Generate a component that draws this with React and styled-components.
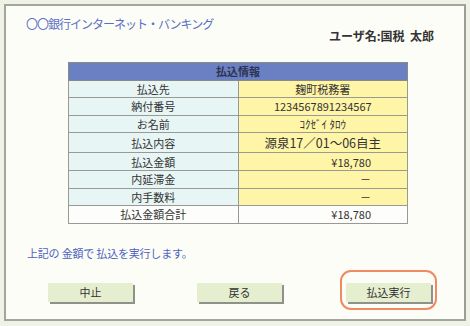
import React from 'react'
import styled, { createGlobalStyle } from 'styled-components'

const GlobalStyle = createGlobalStyle`
  html, body {
    margin: 0;
    padding: 0;
    background: #eff2e6;
  }
  body {
    font-family: "Noto Sans CJK JP", "Noto Sans", sans-serif;
  }
`

const Frame = styled.div`
  box-sizing: border-box;
  margin: 4px;
  width: 462px;
  height: 317px;
  border: 2px solid #a4a59c;
  border-right-color: #9c9d95;
  background: #fdfdf8;
  display: flex;
  flex-direction: column;
`

const TopBar = styled.div`
  display: flex;
  justify-content: space-between;
  align-items: flex-start;
  padding: 10px 30px 0 20px;
`

const Title = styled.div`
  font-size: 12px;
  letter-spacing: -1px;
  color: #5b6fc4;
  line-height: 16px;
`

const UserName = styled.div`
  margin-top: 12px;
  font-size: 12px;
  font-weight: bold;
  color: #333;
  line-height: 16px;
`

const InfoTable = styled.table`
  margin: 18px 0 0 62px;
  width: 340px;
  border-collapse: collapse;
  border: 1px solid #8a8a84;
  font-size: 11px;
  color: #333;
  table-layout: fixed;
`

const HeadCell = styled.th`
  height: 16.6px;
  padding: 0;
  background: #6b7fc3;
  border: 1px solid #8a8a84;
  font-weight: bold;
  color: #2d3350;
  text-align: center;
`

const LabelCell = styled.td`
  height: 16.6px;
  padding: 0;
  width: 170px;
  border: 1px solid #9a9a94;
  background: ${p => (p.$total ? '#fdfdfb' : '#e7f5f5')};
  text-align: center;
`

const ValueCell = styled.td`
  height: 16.6px;
  padding: ${p => (p.$right ? '0 36px 0 0' : '0')};
  border: 1px solid #9a9a94;
  background: ${p => (p.$total ? '#fdfdfb' : '#fff5a6')};
  text-align: ${p => (p.$right ? 'right' : 'center')};
  font-size: ${p => (p.$big ? '12.5px' : '11px')};
`

const Message = styled.div`
  margin: 21px 0 0 21px;
  font-size: 11px;
  color: #4d62c0;
  letter-spacing: -0.2px;
`

const ButtonRow = styled.div`
  display: flex;
  gap: 64px;
  padding-left: 42px;
  margin-top: 17px;
`

const ButtonWrap = styled.div`
  position: relative;
`

const Button = styled.button`
  box-sizing: border-box;
  width: 85px;
  height: 19px;
  padding: 0 0 1px;
  border: none;
  background: #e5efd0;
  box-shadow: 2px 2px 0 #8f918a;
  font-family: inherit;
  font-size: 11px;
  color: #333;
  cursor: pointer;
`

const FocusRing = styled.div`
  position: absolute;
  left: -6px;
  top: -8px;
  right: -6px;
  bottom: -8px;
  border: 2px solid #f08a62;
  border-radius: 11px;
  pointer-events: none;
`

const rows = [
  { label: '払込先', value: '麹町税務署' },
  { label: '納付番号', value: '1234567891234567' },
  { label: 'お名前', value: 'ｺｸｾﾞｲ ﾀﾛｳ' },
  { label: '払込内容', value: '源泉17／01～06自主', big: true },
  { label: '払込金額', value: '¥18,780', right: true },
  { label: '内延滞金', value: '－', right: true },
  { label: '内手数料', value: '－', right: true },
  { label: '払込金額合計', value: '¥18,780', right: true, total: true },
]

export default function App() {
  return (
    <>
      <GlobalStyle />
      <Frame>
        <TopBar>
          <Title>〇〇銀行インターネット・バンキング</Title>
          <UserName>ユーザ名:国税&nbsp;&nbsp;太郎</UserName>
        </TopBar>
        <InfoTable>
          <thead>
            <tr>
              <HeadCell colSpan={2}>払込情報</HeadCell>
            </tr>
          </thead>
          <tbody>
            {rows.map(r => (
              <tr key={r.label}>
                <LabelCell $total={r.total}>{r.label}</LabelCell>
                <ValueCell $total={r.total} $right={r.right} $big={r.big}>
                  {r.value}
                </ValueCell>
              </tr>
            ))}
          </tbody>
        </InfoTable>
        <Message>上記の 金額で 払込を実行します。</Message>
        <ButtonRow>
          <ButtonWrap>
            <Button>中止</Button>
          </ButtonWrap>
          <ButtonWrap>
            <Button>戻る</Button>
          </ButtonWrap>
          <ButtonWrap>
            <Button>払込実行</Button>
            <FocusRing />
          </ButtonWrap>
        </ButtonRow>
      </Frame>
    </>
  )
}
